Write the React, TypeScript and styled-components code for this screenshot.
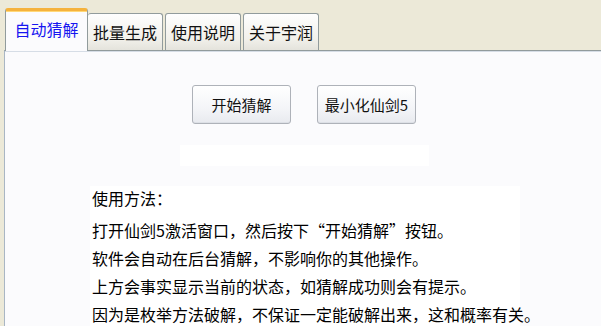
import React, { useState } from "react";
import styled, { createGlobalStyle } from "styled-components";

const GlobalStyle = createGlobalStyle`
	html, body {
		margin: 0;
		padding: 0;
		background: #ece9d8;
		font-family: "Noto Sans CJK SC", "Liberation Sans", sans-serif;
		font-size: 16px;
		color: #000;
	}
	#root {
		width: 601px;
		height: 326px;
		overflow: hidden;
	}
`;

const tabs = ["自动猜解", "批量生成", "使用说明", "关于宇润"];

const lines = [
	"打开仙剑5激活窗口，然后按下“开始猜解”按钮。",
	"软件会自动在后台猜解，不影响你的其他操作。",
	"上方会事实显示当前的状态，如猜解成功则会有提示。",
	"因为是枚举方法破解，不保证一定能破解出来，这和概率有关。",
];

const App = () => {
	const [active, setActive] = useState(0);

	return (
		<Window>
			<GlobalStyle />
			<TabStrip>
				{tabs.map((t, i) => (
					<Tab key={t} $active={i === active} onClick={() => setActive(i)}>
						{t}
					</Tab>
				))}
			</TabStrip>
			<Panel>
				<ButtonRow>
					<PushButton>开始猜解</PushButton>
					<PushButton>最小化仙剑5</PushButton>
				</ButtonRow>
				<StatusLabel />
				<HelpBox>
					<HelpTitle>使用方法：</HelpTitle>
					{lines.map((l) => (
						<HelpLine key={l}>{l}</HelpLine>
					))}
				</HelpBox>
			</Panel>
		</Window>
	);
};

const Window = styled.div`
	display: flex;
	flex-direction: column;
	width: 601px;
	height: 326px;
	overflow: hidden;
`;

const TabStrip = styled.div`
	display: flex;
	flex-shrink: 0;
	align-items: flex-end;
	height: 50px;
	padding-left: 5px;
	position: relative;
	z-index: 1;
`;

const Tab = styled.div<{ $active: boolean }>`
	display: flex;
	align-items: center;
	justify-content: center;
	box-sizing: border-box;
	cursor: default;
	font-size: 16px;
	line-height: 1;
	border: 1px solid #919b9c;
	border-bottom: none;
	border-radius: 3px 3px 0 0;
	margin-left: 2px;
	&:first-child,
	&:nth-child(2) {
		margin-left: 0;
	}
	${(p) =>
		p.$active
			? `
		width: 83px;
		height: 43px;
		margin-bottom: -1px;
		padding-bottom: 4px;
		color: #1616f0;
		background: #fbfbfd;
		border-top: 3px solid #f5b23c;
		box-shadow: inset 0 1px 0 #ffd878;
	`
			: `
		width: 76px;
		height: 37px;
		padding-bottom: 1px;
		color: #111;
		background: linear-gradient(#fefefe, #f1f0ea 70%, #e4e3dc);
	`}
	&:nth-child(2) {
		width: 75px;
		border-left: none;
	}
`;

const Panel = styled.div`
	flex: 1;
	min-height: 0;
	display: flex;
	flex-direction: column;
	margin-left: 4px;
	background: #fbfbfd;
	border-top: 1px solid #919b9c;
	border-left: 1px solid #a9b6c4;
	box-shadow: inset 0 1px 0 #d6dde6;
`;

const ButtonRow = styled.div`
	display: flex;
	flex-shrink: 0;
	gap: 26px;
	padding-left: 187px;
	margin-top: 34px;
`;

const PushButton = styled.button`
	width: 99px;
	height: 39px;
	padding: 0;
	font-family: "Noto Sans CJK SC", "Liberation Sans", sans-serif;
	font-size: 15px;
	color: #111;
	background: linear-gradient(#ffffff, #f4f5f8 60%, #e8eaef);
	border: 1px solid #aeb2b9;
	border-radius: 3px;
	box-shadow: inset 0 -1px 0 #dde0e6;
`;

const StatusLabel = styled.div`
	flex-shrink: 0;
	width: 249px;
	height: 21px;
	margin: 21px 0 0 175px;
	background: #ffffff;
`;

const HelpBox = styled.div`
	flex: 1 0 auto;
	display: flex;
	flex-direction: column;
	width: 428px;
	margin: 20px 0 0 85px;
	padding-left: 2px;
	background: #ffffff;
`;

const HelpTitle = styled.div`
	height: 24px;
	line-height: 24px;
	margin-bottom: 6px;
	font-size: 16px;
	white-space: nowrap;
`;

const HelpLine = styled.div`
	height: 28px;
	line-height: 28px;
	font-size: 16px;
	white-space: nowrap;
`;

export default App;
